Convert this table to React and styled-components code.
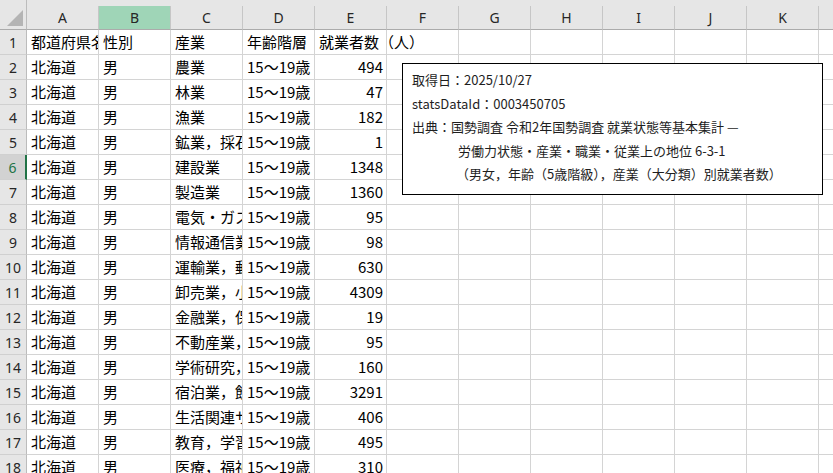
import React from "react";
import styled, { createGlobalStyle } from "styled-components";

const GlobalStyle = createGlobalStyle`
  html, body {
    margin: 0;
    padding: 0;
    background: #fff;
    overflow: hidden;
  }
  body {
    font-family: "Noto Sans CJK JP", "Noto Sans", sans-serif;
  }
`;

const COLS = ["A", "B", "C", "D", "E", "F", "G", "H", "I", "J", "K", "L"];

const rows = [
  ["都道府県名", "性別", "産業", "年齢階層", "就業者数（人）"],
  ["北海道", "男", "農業", "15〜19歳", 494],
  ["北海道", "男", "林業", "15〜19歳", 47],
  ["北海道", "男", "漁業", "15〜19歳", 182],
  ["北海道", "男", "鉱業，採石業，砂利採取業", "15〜19歳", 1],
  ["北海道", "男", "建設業", "15〜19歳", 1348],
  ["北海道", "男", "製造業", "15〜19歳", 1360],
  ["北海道", "男", "電気・ガス・熱供給・水道業", "15〜19歳", 95],
  ["北海道", "男", "情報通信業", "15〜19歳", 98],
  ["北海道", "男", "運輸業，郵便業", "15〜19歳", 630],
  ["北海道", "男", "卸売業，小売業", "15〜19歳", 4309],
  ["北海道", "男", "金融業，保険業", "15〜19歳", 19],
  ["北海道", "男", "不動産業，物品賃貸業", "15〜19歳", 95],
  ["北海道", "男", "学術研究，専門・技術サービス業", "15〜19歳", 160],
  ["北海道", "男", "宿泊業，飲食サービス業", "15〜19歳", 3291],
  ["北海道", "男", "生活関連サービス業，娯楽業", "15〜19歳", 406],
  ["北海道", "男", "教育，学習支援業", "15〜19歳", 495],
  ["北海道", "男", "医療，福祉", "15〜19歳", 310],
];

const Sheet = styled.div`
  position: relative;
  display: grid;
  grid-template-columns: 27px repeat(12, 72px);
  grid-template-rows: 30px;
  grid-auto-rows: 25px;
  width: max-content;
`;

const Corner = styled.div`
  background: #e6e6e6;
  border-right: 1px solid #bcbcbc;
  border-bottom: 1px solid #ababab;
  box-sizing: border-box;
  display: flex;
  align-items: flex-end;
  justify-content: flex-end;
  padding: 0 3px 3px 0;
`;

const CornerMark = styled.div`
  width: 16px;
  height: 16px;
  background: #b4b4b4;
  clip-path: polygon(100% 0, 100% 100%, 0 100%);
`;

const ColHead = styled.div`
  background: #e6e6e6;
  padding-top: 6px;
  box-sizing: border-box;
`;

const ColLabel = styled.div`
  height: 24px;
  box-sizing: border-box;
  background: ${(p) => (p.$active ? "#9fd5b7" : "#e6e6e6")};
  border-right: 1px solid #c6c6c6;
  border-bottom: 1px solid #ababab;
  display: flex;
  align-items: center;
  justify-content: center;
  font-family: "Noto Sans", sans-serif;
  font-size: 14px;
  color: #262626;
`;

const RowHead = styled.div`
  background: ${(p) => (p.$active ? "#d2d2d2" : "#e6e6e6")};
  color: ${(p) => (p.$active ? "#217346" : "#262626")};
  border-right: ${(p) => (p.$active ? "2px solid #217346" : "1px solid #bcbcbc")};
  border-bottom: 1px solid #d0d0d0;
  box-sizing: border-box;
  display: flex;
  align-items: center;
  justify-content: center;
  font-family: "Noto Sans", sans-serif;
  font-size: 14px;
`;

const Cell = styled.div`
  border-right: 1px solid #d4d4d4;
  border-bottom: 1px solid #d4d4d4;
  box-sizing: border-box;
  padding: 0 3px 0 4px;
  font-size: 15px;
  line-height: 24px;
  color: #000;
  white-space: nowrap;
  overflow: ${(p) => (p.$spill ? "visible" : "hidden")};
  text-align: ${(p) => (p.$num ? "right" : "left")};
`;

const Note = styled.div`
  position: absolute;
  left: 402px;
  top: 63px;
  width: 421px;
  height: 132px;
  box-sizing: border-box;
  background: #fff;
  border: 1px solid #000;
  padding: 4px 9px;
  font-size: 13px;
  line-height: 23.5px;
  color: #1e1e1e;
  white-space: nowrap;
`;

const NoteLine = styled.div`
  padding-left: ${(p) => p.$indent || 0}px;
`;

export default function App() {
  return (
    <>
      <GlobalStyle />
      <Sheet>
        <Corner>
          <CornerMark />
        </Corner>
        {COLS.map((c) => (
          <ColHead key={c}>
            <ColLabel $active={c === "B"}>{c}</ColLabel>
          </ColHead>
        ))}
        {rows.map((r, i) => (
          <React.Fragment key={i}>
            <RowHead $active={i === 5}>{i + 1}</RowHead>
            {COLS.map((c, j) => {
              const v = r[j];
              return (
                <Cell
                  key={c}
                  $num={typeof v === "number"}
                  $spill={i === 0 && j === 4}
                >
                  {v}
                </Cell>
              );
            })}
          </React.Fragment>
        ))}
        <Note>
          <NoteLine>取得日：2025/10/27</NoteLine>
          <NoteLine>statsDataId：0003450705</NoteLine>
          <NoteLine>出典：国勢調査 令和2年国勢調査 就業状態等基本集計 —</NoteLine>
          <NoteLine $indent={46}>労働力状態・産業・職業・従業上の地位 6-3-1</NoteLine>
          <NoteLine $indent={44}>（男女，年齢（5歳階級），産業（大分類）別就業者数）</NoteLine>
        </Note>
      </Sheet>
    </>
  );
}
